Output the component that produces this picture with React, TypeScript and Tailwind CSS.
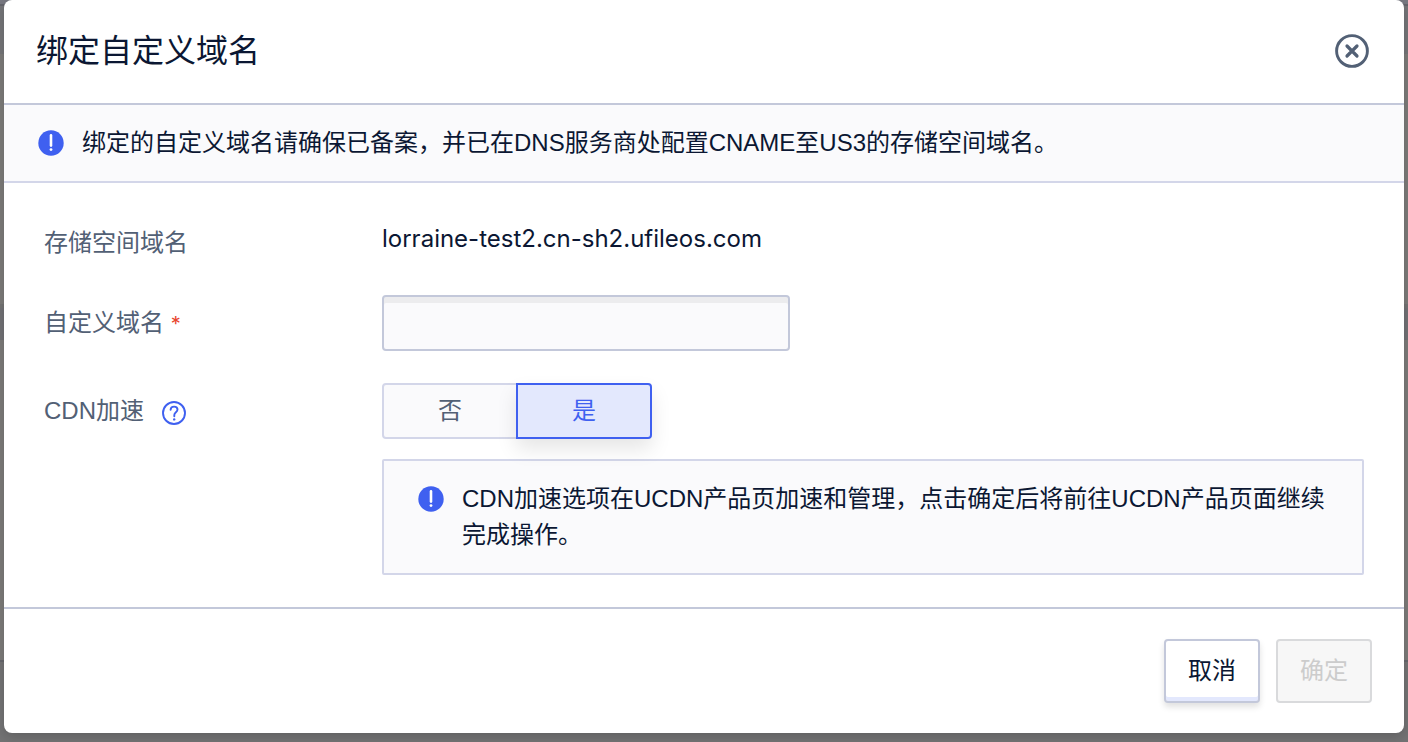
import { useState } from "react";

function InfoIcon() {
  return (
    <svg viewBox="0 0 26 26" className="size-[26px] shrink-0" aria-hidden="true">
      <circle cx="13" cy="13" r="12.7" fill="#3f60f0" />
      <path d="M13 5.400v10.200" stroke="#fff" strokeWidth="2.600" strokeLinecap="round" />
      <circle cx="13" cy="19.600" r="1.400" fill="#fff" />
    </svg>
  );
}

function HelpIcon() {
  return (
    <svg viewBox="0 0 24 24" className="size-6" fill="none" stroke="#3f60f0" aria-hidden="true">
      <circle cx="12" cy="12" r="11" strokeWidth="1.900" />
      <path
        d="M8.600 8.800C8.700 6.800 10.200 5.600 12.100 5.600c2 0 3.400 1.300 3.400 3 0 2.600-3.200 2.700-3.200 5.400v1.200"
        strokeWidth="1.900"
        strokeLinecap="round"
      />
      <circle cx="12.200" cy="18.400" r="1.200" fill="#3f60f0" stroke="none" />
    </svg>
  );
}

function CloseIcon() {
  return (
    <svg viewBox="0 0 34 34" className="size-[34px]" fill="none" stroke="#526075" aria-hidden="true">
      <circle cx="17" cy="17" r="15.400" strokeWidth="2.900" />
      <path d="M12 12l10 10M22 12L12 22" strokeWidth="3.200" strokeLinecap="round" />
    </svg>
  );
}

function Backdrop() {
  return (
    <div className="absolute inset-0 -z-10 flex flex-col bg-[#7c7b79]" aria-hidden="true">
      <div className="h-[6px] border-b-2 border-[#64656c] bg-[#777881]" />
      <div className="h-12 bg-[#747578]" />
      <div className="h-[250px] bg-[#7c7b79]" />
      <div className="h-9 border-t-4 border-[#737373] bg-[#717175]" />
      <div className="h-80 bg-[#7c7b79]" />
      <div className="grow border-t-2 border-[#66676c] bg-[#737374]" />
    </div>
  );
}

export default function App() {
  const [cdn, setCdn] = useState(true);
  const [domain, setDomain] = useState("");

  const idle = "border-[#d3d6e9] bg-[#fafafc] text-[#526075]";
  const active = "z-10 border-[#3f60f0] bg-[#e3e8fd] text-[#3f60f0] shadow-[0_10px_20px_rgba(0,0,0,0.1)]";

  return (
    <div className="relative isolate min-h-screen px-1 pb-2 font-['Liberation_Sans','Noto_Sans_CJK_SC',sans-serif] text-2xl leading-9 text-[#0b1733]">
      <Backdrop />
      <div
        role="dialog"
        aria-labelledby="dialog-title"
        className="rounded-[8px] bg-white shadow-[0_4px_12px_rgba(0,0,0,0.16)]"
      >
        <header className="flex items-center justify-between border-b-2 border-[#c3c8da] px-8 pt-[27px] pb-7">
          <h1 id="dialog-title" className="text-[32px] leading-12">
            绑定自定义域名
          </h1>
          <button type="button" aria-label="关闭" className="mr-[3px]">
            <CloseIcon />
          </button>
        </header>

        <div className="flex items-center gap-[18px] border-b-2 border-[#d3d6e9] bg-[#fafafc] px-[34px] py-5">
          <InfoIcon />
          <p>绑定的自定义域名请确保已备案，并已在DNS服务商处配置CNAME至US3的存储空间域名。</p>
        </div>

        <form id="bind-form" className="px-10 pt-8 pb-8" onSubmit={(e) => e.preventDefault()}>
          <div className="mb-8 flex h-12 items-center">
            <span className="w-[338px] shrink-0 pt-2 text-[#526075]">存储空间域名</span>
            <span className="font-['Inter','Noto_Sans_CJK_SC',sans-serif]">lorraine-test2.cn-sh2.ufileos.com</span>
          </div>

          <div className="mb-8 flex h-14 items-center">
            <label htmlFor="domain" className="w-[338px] shrink-0 text-[#526075]">
              自定义域名 <span className="font-['Inter',sans-serif] text-xl text-[#e8452f]">*</span>
            </label>
            <input
              id="domain"
              type="text"
              required
              value={domain}
              onChange={(e) => setDomain(e.target.value)}
              className="h-14 w-[408px] rounded-[4px] border-2 border-[#c3c8da] bg-[#fafafc] px-4 shadow-[inset_0_6px_0_#ececee] outline-none"
            />
          </div>

          <div className="flex items-start">
            <div className="flex h-14 w-[338px] shrink-0 items-center gap-[18px] text-[#526075]">
              <span id="cdn-label">CDN加速</span>
              <button type="button" aria-label="帮助" className="pt-1">
                <HelpIcon />
              </button>
            </div>
            <div className="min-w-0 grow">
              <div role="group" aria-labelledby="cdn-label" className="isolate mb-5 flex">
                <button
                  type="button"
                  aria-pressed={!cdn}
                  onClick={() => setCdn(false)}
                  className={`relative h-14 w-34 rounded-l-[4px] border-2 ${cdn ? idle : active}`}
                >
                  否
                </button>
                <button
                  type="button"
                  aria-pressed={cdn}
                  onClick={() => setCdn(true)}
                  className={`relative -ml-0.5 h-14 w-34 rounded-r-[4px] border-2 ${cdn ? active : idle}`}
                >
                  是
                </button>
              </div>
              <div className="flex items-start gap-[18px] rounded-[2px] border-2 border-[#d3d6e9] bg-[#fafafc] py-5 pr-[34px] pl-[34px]">
                <div className="flex h-9 items-center">
                  <InfoIcon />
                </div>
                <p>CDN加速选项在UCDN产品页加速和管理，点击确定后将前往UCDN产品页面继续完成操作。</p>
              </div>
            </div>
          </div>
        </form>

        <footer className="flex justify-end gap-4 border-t-2 border-[#c3c8da] px-8 py-[30px]">
          <button
            type="button"
            className="h-16 w-24 rounded-[4px] border-2 border-[#c3c8da] bg-white shadow-[inset_0_-4px_0_#e3e8fd,0_4px_6px_rgba(0,0,0,0.12)]"
          >
            取消
          </button>
          <button
            type="submit"
            form="bind-form"
            disabled={!domain}
            className="h-16 w-24 rounded-[4px] border-2 border-[#d9dadc] bg-[#f7f7f7] text-[#cccccc]"
          >
            确定
          </button>
        </footer>
      </div>
    </div>
  );
}
